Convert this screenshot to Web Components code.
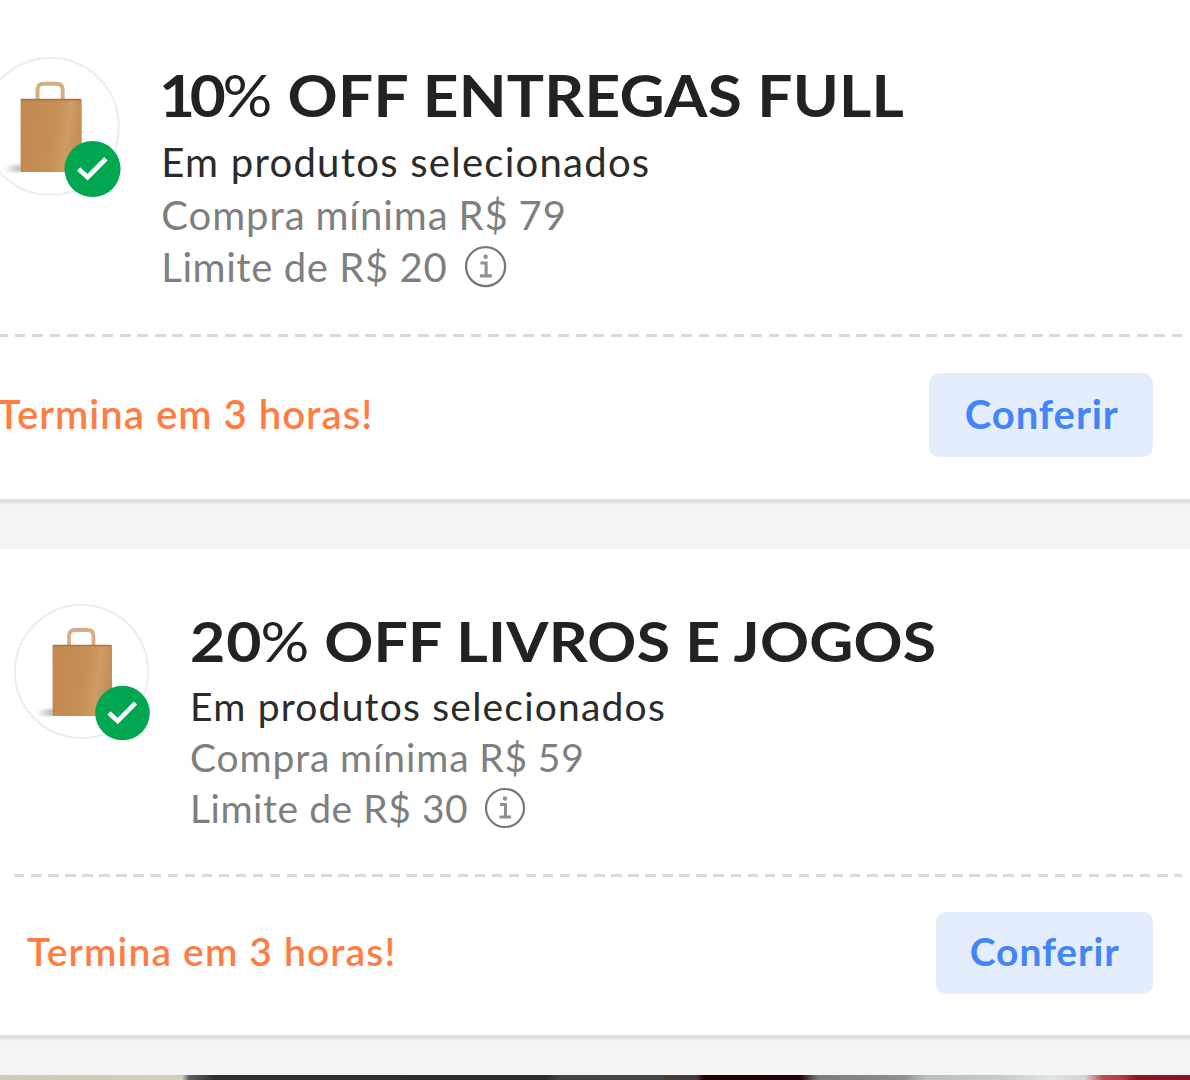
<!DOCTYPE html>
<html lang="pt-BR">
<head>
<meta charset="UTF-8">
<title>Cupons</title>
<style>
    body {
        margin: 0;
        height: 1080px;
        overflow: hidden;
        background: #f4f4f4;
        font-family: Lato, "Open Sans", sans-serif;
    }
</style>
</head>
<body>
<coupon-list>
    <coupon-card class="first">
        <bag-icon slot="icon"></bag-icon>
        <span slot="title"><coupon-percent>10<span slot="sign">%</span></coupon-percent> OFF ENTREGAS FULL</span>
        <span slot="subtitle">Em produtos selecionados</span>
        <span slot="minimum">Compra mínima R$ 79</span>
        <span slot="limit">Limite de R$ 20</span>
        <span slot="deadline">Termina em 3 horas!</span>
        <coupon-button slot="action">Conferir</coupon-button>
    </coupon-card>
    <coupon-card class="second">
        <bag-icon slot="icon"></bag-icon>
        <span slot="title"><coupon-percent>20<span slot="sign">%</span></coupon-percent> OFF LIVROS E JOGOS</span>
        <span slot="subtitle">Em produtos selecionados</span>
        <span slot="minimum">Compra mínima R$ 59</span>
        <span slot="limit">Limite de R$ 30</span>
        <span slot="deadline">Termina em 3 horas!</span>
        <coupon-button slot="action">Conferir</coupon-button>
    </coupon-card>
    <photo-strip></photo-strip>
</coupon-list>

<script>
class CouponList extends HTMLElement {
    constructor() {
        super();
        this.attachShadow({ mode: 'open' });
        this.shadowRoot.innerHTML = `
            <style>
                :host {
                    display: flex;
                    flex-direction: column;
                    width: 1190px;
                    height: 1080px;
                    overflow: hidden;
                }

                ::slotted(.first) {
                    --u: 1.028px;
                    --left: -19.5px;
                    --gap: 42px;
                    --note-left: -3px;
                    --note-space: 1px;
                    --dash-left: -3px;
                    --title-left: -2px;
                    --stretch: 1.08;
                    --digit-space: -5px;
                    --sign-left: 2px;
                    height: 499px;
                    padding-top: 57px;
                    margin-bottom: 50px;
                }

                ::slotted(.second) {
                    --u: 1px;
                    --left: 14px;
                    --gap: 41px;
                    --note-left: 27px;
                    --note-space: 1.15px;
                    --dash-left: 13.5px;
                    --title-left: 0px;
                    --stretch: 1.085;
                    --digit-space: 1px;
                    --sign-left: -2px;
                    height: 486px;
                    padding-top: 55px;
                    margin-bottom: 40px;
                }
            </style>
            <slot></slot>
        `;
    }
}

class CouponCard extends HTMLElement {
    constructor() {
        super();
        this.attachShadow({ mode: 'open' });
        this.shadowRoot.innerHTML = `
            <style>
                :host {
                    display: flex;
                    flex-direction: column;
                    flex: none;
                    box-sizing: border-box;
                    background: #fff;
                    box-shadow: 0 1px 0 #e0e0e0, 0 3px 0 #dfdfdf, 0 4px 0 #e6e6e6, 0 5px 0 #ececec, 0 6px 0 #f1f1f1;
                }

                .top {
                    display: flex;
                    align-items: flex-start;
                    height: calc(269.5 * var(--u));
                }

                .icon {
                    flex: none;
                    margin-left: var(--left);
                    margin-right: var(--gap);
                }

                .info {
                    padding-top: calc(10 * var(--u));
                    white-space: nowrap;
                    font-size: calc(39 * var(--u));
                    line-height: calc(51 * var(--u));
                    color: #7f7f7f;
                }

                .title {
                    margin-left: var(--title-left);
                    font-size: calc(56 * var(--u));
                    line-height: calc(54 * var(--u));
                    margin-bottom: calc(13 * var(--u));
                    font-weight: 700;
                    letter-spacing: calc(0.2 * var(--u));
                    color: #222;
                    transform: scaleX(var(--stretch));
                    transform-origin: 0 0;
                }

                .subtitle {
                    letter-spacing: calc(1.2 * var(--u));
                    color: #2b2b2b;
                }

                .minimum {
                    letter-spacing: calc(0.9 * var(--u));
                    word-spacing: calc(-1.2 * var(--u));
                }

                .limit {
                    display: flex;
                    align-items: center;
                    gap: calc(16 * var(--u));
                    letter-spacing: calc(0.55 * var(--u));
                }

                .divider {
                    flex: none;
                    height: 3px;
                    margin-left: var(--dash-left);
                    margin-right: 8px;
                    background: repeating-linear-gradient(90deg, #dadada 0 calc(10.5 * var(--u)), transparent calc(10.5 * var(--u)) calc(17.06 * var(--u)));
                }

                .bottom {
                    display: flex;
                    align-items: center;
                    justify-content: space-between;
                    height: calc(82 * var(--u));
                    margin-top: calc(35 * var(--u));
                    padding-right: 37px;
                }

                .deadline {
                    margin-left: var(--note-left);
                    padding-bottom: 3px;
                    font-size: calc(39 * var(--u));
                    font-weight: 600;
                    letter-spacing: var(--note-space);
                    white-space: nowrap;
                    color: #ff7d43;
                }
            </style>
            <div class="top">
                <div class="icon"><slot name="icon"></slot></div>
                <div class="info">
                    <div class="title"><slot name="title"></slot></div>
                    <div class="subtitle"><slot name="subtitle"></slot></div>
                    <div class="minimum"><slot name="minimum"></slot></div>
                    <div class="limit"><slot name="limit"></slot><info-icon></info-icon></div>
                </div>
            </div>
            <div class="divider"></div>
            <div class="bottom">
                <div class="deadline"><slot name="deadline"></slot></div>
                <slot name="action"></slot>
            </div>
        `;
    }
}

// Discount figure: bold digits with a lighter percent sign
class CouponPercent extends HTMLElement {
    constructor() {
        super();
        this.attachShadow({ mode: 'open' });
        this.shadowRoot.innerHTML = `<style>
                :host {
                    display: inline;
                    letter-spacing: var(--digit-space);
                }

                ::slotted([slot="sign"]) {
                    margin-left: var(--sign-left);
                    font-weight: 400;
                    letter-spacing: 0;
                }
            </style><slot></slot><slot name="sign"></slot>`;
    }
}

class CouponButton extends HTMLElement {
    constructor() {
        super();
        this.attachShadow({ mode: 'open' });
        this.shadowRoot.innerHTML = `
            <style>
                :host {
                    display: block;
                }

                button {
                    display: block;
                    width: calc(217.5 * var(--u));
                    height: calc(82 * var(--u));
                    padding: 0 0 3px 1px;
                    border: 0;
                    border-radius: calc(10 * var(--u));
                    background: #e3edfb;
                    color: #4384fb;
                    font-family: inherit;
                    font-size: calc(39 * var(--u));
                    font-weight: 700;
                    letter-spacing: calc(0.9 * var(--u));
                }
            </style>
            <button type="button"><slot></slot></button>
        `;
    }
}

class InfoIcon extends HTMLElement {
    constructor() {
        super();
        this.attachShadow({ mode: 'open' });
        this.shadowRoot.innerHTML = `
            <style>
                :host {
                    display: block;
                    height: calc(44 * var(--u));
                }

                svg {
                    display: block;
                    width: calc(42 * var(--u));
                    height: calc(42 * var(--u));
                }
            </style>
            <svg viewBox="0 0 42 42" fill="none" stroke="#777">
                <circle cx="21" cy="21" r="19" stroke-width="2.2"/>
                <path d="M16 17.500H21.500V29.500M15.500 30H27" stroke="#909090" stroke-width="3"/>
                <circle cx="21" cy="11.500" r="2.2" fill="#909090" stroke="none"/>
            </svg>
        `;
    }
}

class BagIcon extends HTMLElement {
    constructor() {
        super();
        this.attachShadow({ mode: 'open' });
        this.shadowRoot.innerHTML = `
            <style>
                :host {
                    display: block;
                    width: calc(135 * var(--u));
                }

                svg {
                    display: block;
                    width: 100%;
                    overflow: visible;
                }
            </style>
            <svg viewBox="0 0 135 135">
                <defs>
                    <linearGradient id="paper" x1="0" y1="0" x2="1" y2="0.15">
                        <stop offset="0" stop-color="#c1884f"/>
                        <stop offset="0.6" stop-color="#c68f57"/>
                        <stop offset="0.82" stop-color="#cf9b64"/>
                        <stop offset="1" stop-color="#c58e57"/>
                    </linearGradient>
                    <linearGradient id="shade" x1="0" y1="0" x2="1" y2="0">
                        <stop offset="0" stop-color="#bbb" stop-opacity="0"/>
                        <stop offset="1" stop-color="#9c9488" stop-opacity="0.7"/>
                    </linearGradient>
                    <filter id="soft" x="-30%" y="-80%" width="160%" height="260%">
                        <feGaussianBlur stdDeviation="1.3"/>
                    </filter>
                </defs>
                <circle cx="67.5" cy="67.5" r="66.5" fill="#fff" stroke="#ededed" stroke-width="2"/>
                <path d="M20 109L30 105H39V112H28Z" fill="url(#shade)" filter="url(#soft)"/>
                <path d="M55 41V32Q55 26 61 26H73.500Q79.500 26 79.500 32V41" fill="none" stroke="#d6ae82" stroke-width="3.8"/>
                <path d="M38.500 41H98V112H38.500Z" fill="url(#paper)"/>
                <path d="M39 41.500H97" stroke="#a87442" stroke-width="1.6"/>
                <circle cx="108.500" cy="109" r="27.3" fill="#00a650"/>
                <path d="M95 109L103.700 117L121.500 99" fill="none" stroke="#fff" stroke-width="4.6"/>
            </svg>
        `;
    }
}

// Top edge of the next banner, just peeking in
class PhotoStrip extends HTMLElement {
    constructor() {
        super();
        this.attachShadow({ mode: 'open' });
        this.shadowRoot.innerHTML = `
            <style>
                :host {
                    display: block;
                    flex: none;
                    height: 5px;
                    background: linear-gradient(90deg,
                        #cdccb6 0, #d0cfb7 182px, #606060 189px, #303032 215px,
                        #2c2c2e 545px, #434343 560px, #444 662px, #453b36 666px,
                        #453933 697px, #220006 704px, #250005 800px, #7c7b7d 818px,
                        #8e9092 905px, #b9bebf 925px, #c5cacb 1000px, #e1e4e4 1050px,
                        #d6d5d4 1085px, #bb4c50 1103px, #ae3d43 1122px, #8d1520 1137px, #861520 1190px);
                }
            </style>
        `;
    }
}

customElements.define('coupon-list', CouponList);
customElements.define('coupon-card', CouponCard);
customElements.define('coupon-percent', CouponPercent);
customElements.define('coupon-button', CouponButton);
customElements.define('info-icon', InfoIcon);
customElements.define('bag-icon', BagIcon);
customElements.define('photo-strip', PhotoStrip);
</script>
</body>
</html>
